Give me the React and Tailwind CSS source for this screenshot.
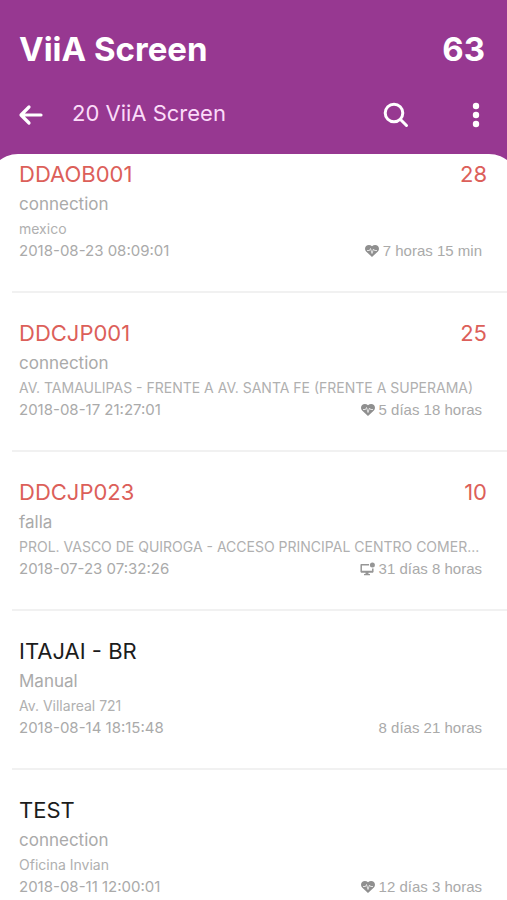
import React from "react";

const screens = [
  { name: "DDAOB001", count: 28, reason: "connection", place: "mexico", date: "2018-08-23 08:09:01", icon: "heart", elapsed: "7 horas 15 min", alert: true },
  { name: "DDCJP001", count: 25, reason: "connection", place: "AV. TAMAULIPAS - FRENTE A AV. SANTA FE (FRENTE A SUPERAMA)", date: "2018-08-17 21:27:01", icon: "heart", elapsed: "5 días 18 horas", alert: true },
  { name: "DDCJP023", count: 10, reason: "falla", place: "PROL. VASCO DE QUIROGA - ACCESO PRINCIPAL CENTRO COMER...", date: "2018-07-23 07:32:26", icon: "monitor", elapsed: "31 días 8 horas", alert: true },
  { name: "ITAJAI - BR", reason: "Manual", place: "Av. Villareal 721", date: "2018-08-14 18:15:48", elapsed: "8 días 21 horas" },
  { name: "TEST", reason: "connection", place: "Oficina Invian", date: "2018-08-11 12:00:01", icon: "heart", elapsed: "12 días 3 horas" },
];

function HeartIcon() {
  return (
    <svg className="h-3 w-[14px]" viewBox="0 0 14 12" aria-hidden="true">
      <path fill="#8f8f8f" d="M7 12 1.1 6.4C-.4 4.800-.3 2.300 1.100 1 2.700-.4 5.300-.3 7 1.200 8.700-.3 11.300-.4 12.900 1c1.400 1.300 1.500 3.800 0 5.400Z" />
      <path fill="none" stroke="#e4e4e4" strokeWidth="1" strokeLinejoin="round" d="M2 5.500h2.500l1-2 1.500 5L8.500 4l1 1.500H12" />
    </svg>
  );
}

function MonitorIcon() {
  return (
    <svg className="h-[14px] w-[15px]" viewBox="0 0 15 14" aria-hidden="true">
      <path fill="none" stroke="#969696" strokeWidth="1.500" strokeLinejoin="round" d="M9 2.800H1.200v7h11.600V6.500" />
      <path fill="#969696" d="M1 8.700h12v1.800H1zM5.500 10h3v2h-3zM4 12h6v1.300H4z" />
      <circle cx="12.400" cy="3" r="2.500" fill="#969696" />
    </svg>
  );
}

function ScreenRow({ screen }) {
  return (
    <li className="ml-3 border-b-2 border-[#f1f1f1] pt-[25px] pr-5 pb-7 pl-[7px] first:pt-[5px]">
      <div className={screen.alert ? "flex justify-between text-[22px] leading-[30px] text-[#dc5f5a]" : "flex justify-between text-[22px] leading-[30px] text-[#1c1c1c]"}>
        <h2>{screen.name}</h2>
        <span>{screen.count}</span>
      </div>
      <p className="text-[17px] leading-[31px] text-[#aaaaaa]">{screen.reason}</p>
      <p className="truncate text-[14px] leading-[18px] text-[#b0b0b0]">{screen.place}</p>
      <div className="flex items-center justify-between text-[15px] leading-[25px] text-[#aaaaaa]">
        <time>{screen.date}</time>
        <span className="flex items-center gap-1 pr-[5px] font-['Liberation_Sans',sans-serif]">
          {screen.icon === "heart" && <HeartIcon />}
          {screen.icon === "monitor" && <MonitorIcon />}
          {screen.elapsed}
        </span>
      </div>
    </li>
  );
}

export default function App() {
  return (
    <div className="h-screen overflow-hidden bg-[#973891] font-['Inter',sans-serif]">
      <header className="text-white">
        <div className="flex items-center justify-between pt-7 pr-[22px] pl-[19px] text-[33px] leading-[42px] font-bold">
          <h1>ViiA Screen</h1>
          <span>63</span>
        </div>
        <nav className="flex h-[84px] items-center pt-[2px] pr-5 pl-[18px]" aria-label="Toolbar">
          <button type="button" aria-label="Back" className="mt-1">
            <svg className="h-6 w-[26px]" viewBox="0 0 26 24" fill="none" stroke="currentColor" strokeWidth="3.200" strokeLinecap="round" strokeLinejoin="round">
              <path d="M23 12H4M11 4 3 12l8 8" />
            </svg>
          </button>
          <span className="ml-7 flex-1 text-[22px] text-[#fbdcf9]">20 ViiA Screen</span>
          <button type="button" aria-label="Search" className="mt-1">
            <svg className="size-[26px]" viewBox="0 0 26 26" fill="none" stroke="currentColor" strokeWidth="3" strokeLinecap="round">
              <circle cx="11" cy="11" r="8.800" />
              <path d="m17.500 17.500 6 6" />
            </svg>
          </button>
          <button type="button" aria-label="More options" className="mt-1 ml-14">
            <svg className="h-[26px] w-[22px]" viewBox="0 0 22 26" fill="currentColor">
              <circle cx="11" cy="4" r="3.200" />
              <circle cx="11" cy="13" r="3.200" />
              <circle cx="11" cy="22" r="3.200" />
            </svg>
          </button>
        </nav>
      </header>
      <main className="-mx-3 min-h-screen rounded-t-[30px] bg-white px-3">
        <ul>
          {screens.map((screen) => <ScreenRow key={screen.name} screen={screen} />)}
        </ul>
      </main>
    </div>
  );
}
